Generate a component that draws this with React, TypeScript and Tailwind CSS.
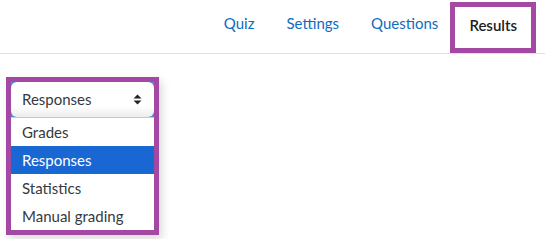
import React from 'react'

const font = { fontFamily: 'Lato, "Open Sans", sans-serif' }

const navItems = [
  { label: 'Quiz', gap: 'mr-[32px]' },
  { label: 'Settings', gap: 'mr-[32px]' },
  { label: 'Questions', gap: 'mr-[12px]' },
]
const options = ['Grades', 'Responses', 'Statistics', 'Manual grading']

function SortArrows() {
  return (
    <svg width="9" height="11" viewBox="0 0 9 11" className="text-[#212529]">
      <path d="M4.5 0.5 L8.5 4.5 L0.5 4.5 Z" fill="currentColor" />
      <path d="M4.5 10.5 L8.5 6.5 L0.5 6.5 Z" fill="currentColor" />
    </svg>
  )
}

export default function App() {
  const selected = 'Responses'

  return (
    <div className="w-[545px] h-[239px] bg-white overflow-hidden" style={font}>
      {/* Secondary navigation */}
      <div className="h-[54px] border-b border-[#dee2e6] flex items-start justify-end pr-[9px]">
        {navItems.map((item) => (
          <a key={item.label} className={`h-[53px] flex items-center pb-[6px] text-[15px] text-[#0f6cbf] ${item.gap}`}>
            {item.label}
          </a>
        ))}
        <div className="mt-[2px] h-[51px] border-[5px] border-[#a349a4] px-[14px] flex items-center pb-[4px] text-[15px] font-semibold text-[#1d2125]">
          Results
        </div>
      </div>

      {/* Report selector */}
      <div className="ml-[6px] mt-[23px] w-[153px] border-[5px] border-[#a349a4] shadow-[3px_4px_8px_rgba(0,0,0,0.15)]">
        <div className="h-[35px] bg-[#4a8fe0]">
          <div className="h-full bg-gradient-to-b from-white from-70% to-[#ececec] rounded-[6px] flex items-center justify-between pl-[11px] pr-[12px] text-[15px] text-[#343a40]">
            <span>{selected}</span>
            <SortArrows />
          </div>
        </div>
        <ul className="border-t border-[#c6c9cc] bg-white">
          {options.map((opt) => (
            <li
              key={opt}
              className={
                opt === selected
                  ? 'h-[28px] pl-[11px] flex items-center text-[15px] bg-[#1967d2] text-white'
                  : 'h-[28px] pl-[11px] flex items-center text-[15px] text-[#343a40]'
              }
            >
              {opt}
            </li>
          ))}
        </ul>
      </div>
    </div>
  )
}
